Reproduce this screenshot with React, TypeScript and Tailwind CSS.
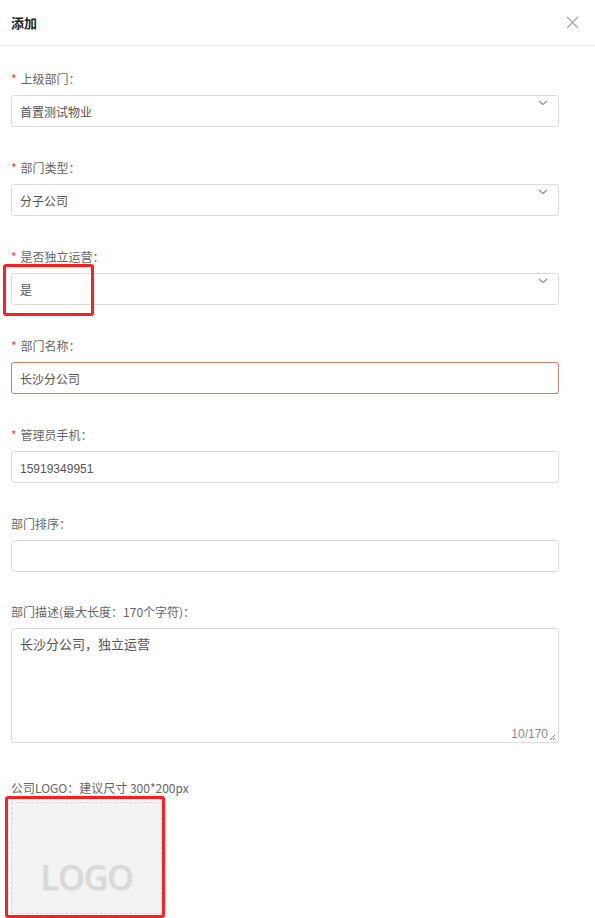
import type { ReactNode } from "react";

const font = { fontFamily: '"Noto Sans CJK SC", "Liberation Sans", sans-serif' };

function Label({ text, required }: { text: string; required?: boolean }) {
  return (
    <div className="flex h-[17px] items-center text-[12px] leading-[17px] text-[#666]">
      {required ? <span className="mr-[4px] text-[12px] text-[#f0441c]">*</span> : null}
      <span>{text}</span>
    </div>
  );
}

function Chevron() {
  return (
    <svg width="10" height="6" viewBox="0 0 10 6" className="mt-[4px]">
      <path d="M1 1 L5 4.5 L9 1" fill="none" stroke="#8a9099" strokeWidth="1.2" />
    </svg>
  );
}

function Box({ children, select, danger }: { children?: ReactNode; select?: boolean; danger?: boolean }) {
  return (
    <div
      className={
        "flex h-[32px] w-[548px] items-start justify-between rounded-[3px] border bg-white pl-[8px] pr-[10px] " +
        (danger ? "border-[#c9806f]" : "border-[#dcdcdc]")
      }
    >
      <span className="mt-[7px] text-[12px] leading-[17px] text-[#555]">{children}</span>
      {select ? <Chevron /> : null}
    </div>
  );
}

function Field({ label, required, children }: { label: string; required?: boolean; children: ReactNode }) {
  return (
    <div className="mb-[32px] flex flex-col gap-[8px]">
      <Label text={label} required={required} />
      {children}
    </div>
  );
}

export default function App() {
  return (
    <div className="min-h-[918px] w-[595px] bg-white" style={font}>
      <header className="flex h-[46px] items-center justify-between border-b border-[#e8e8e8] pl-[11px] pr-[16px]">
        <h1 className="text-[13px] font-bold text-[#222]">添加</h1>
        <svg width="13" height="13" viewBox="0 0 13 13">
          <path d="M1 1 L12 12 M12 1 L1 12" stroke="#a0a4aa" strokeWidth="1.1" />
        </svg>
      </header>

      <main className="px-[11px] pt-[24px]">
        <Field label="上级部门：" required>
          <Box select>首置测试物业</Box>
        </Field>
        <Field label="部门类型：" required>
          <Box select>分子公司</Box>
        </Field>
        <Field label="是否独立运营：" required>
          <div className="relative">
            <Box select>是</Box>
            <div className="absolute -left-[8px] -top-[9px] h-[52px] w-[91px] rounded-[3px] border-[3px] border-[#ff1f1f]" />
          </div>
        </Field>
        <Field label="部门名称：" required>
          <Box danger>长沙分公司</Box>
        </Field>
        <Field label="管理员手机：" required>
          <Box>
            <span style={{ fontFamily: '"Liberation Sans", sans-serif' }}>15919349951</span>
          </Box>
        </Field>
        <Field label="部门排序：">
          <Box />
        </Field>

        <div className="-mt-[1px] mb-[36px] flex flex-col gap-[8px]">
          <Label text="部门描述(最大长度：170个字符)：" />
          <div className="relative h-[115px] w-[548px] rounded-[3px] border border-[#dcdcdc] bg-white px-[8px] pt-[5px]">
            <p className="text-[13px] leading-[20px] text-[#555]">长沙分公司，独立运营</p>
            <div className="absolute bottom-[1px] right-[2px] flex items-end gap-[1px]">
              <span className="text-[12px] leading-[14px] text-[#888]" style={{ fontFamily: '"Liberation Sans", sans-serif' }}>
                10/170
              </span>
              <svg width="7" height="7" viewBox="0 0 7 7">
                <path d="M6 1 L1 6 M6 4 L4 6" stroke="#777" strokeWidth="0.9" />
              </svg>
            </div>
          </div>
        </div>

        <div className="flex flex-col gap-[4px]">
          <div className="h-[17px] text-[12px] leading-[17px] text-[#666]">公司LOGO：建议尺寸 300*200px</div>
          <div className="relative mt-[2px] w-[151px]">
            <div className="flex h-[112px] w-[151px] items-end justify-center border border-dashed border-[#d6d6d6] bg-[#f3f3f3] pb-[19px]">
              <span
                className="text-[34px] font-semibold leading-[34px] tracking-[-1px] text-[#d9d9d9]"
                style={{ fontFamily: '"Open Sans", "Liberation Sans", sans-serif', textShadow: "1px 1px 0 #e6e6e6" }}
              >
                LOGO
              </span>
            </div>
            <div className="absolute -left-[6px] -top-[6px] h-[122px] w-[160px] rounded-[3px] border-[3px] border-[#ff1f1f]" />
          </div>
        </div>
      </main>
    </div>
  );
}
